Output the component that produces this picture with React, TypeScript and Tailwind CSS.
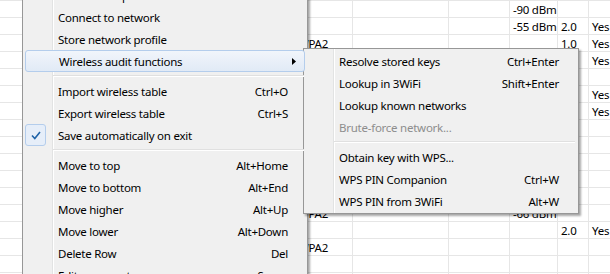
import React from 'react'

// ── Background table ──────────────────────────────────────────────────────────
const colW = [294, 58, 96, 61, 48, 31, 40]

const rows: string[][] = [
  ['', '', '', '', '-90 dBm', '', ''],
  ['', '', '', '', '-55 dBm', '2.0', 'Yes'],
  ['', 'WPA2', '', '', '', '1.0', 'Yes'],
  ['', 'WPA2', '', '', '-71 dBm', '2.0', 'Yes'],
  ['', '', '', '', '', '', ''],
  ['', 'WPA2', '', '', '-80 dBm', '2.0', 'Yes'],
  ['', 'WPA2', '', '', '-84 dBm', '2.0', 'Yes'],
  ['', '', '', '', '', '', ''],
  ['', '', '', '', '', '', ''],
  ['', '', '', '', '', '', ''],
  ['', '', '', '', '', '', ''],
  ['', '', '', '', '', '', ''],
  ['', 'WPA2', '', '', '-66 dBm', '', ''],
  ['', '', '', '', '', '2.0', 'Yes'],
  ['', 'WPA2', '', '', '', '', ''],
  ['', '', '', '', '', '', ''],
  ['', '', '', '', '', '', ''],
]

function Table() {
  return (
    <div className="flex flex-col">
      {rows.map((r, i) => (
        <div key={i} className="flex h-[17px] border-t border-[#e6e6e6]">
          {r.map((c, j) => (
            <div key={j}
              className={`shrink-0 px-[3px] pt-[1px] leading-[16px] whitespace-nowrap overflow-hidden ${j > 0 ? 'border-l border-[#e6e6e6]' : ''}`}
              style={{ width: colW[j] }}>
              {c}
            </div>
          ))}
        </div>
      ))}
    </div>
  )
}

// ── Menu pieces ───────────────────────────────────────────────────────────────
interface ItemProps {
  label: string
  shortcut?: string
  arrow?: boolean
  checked?: boolean
  disabled?: boolean
  active?: boolean
}

function Item({ label, shortcut, arrow, checked, disabled, active }: ItemProps) {
  return (
    <div className={`relative z-10 flex h-[22px] items-center pt-[1px] pl-[33px] pr-[17px] whitespace-nowrap
      ${active ? 'rounded-[3px] border border-[#b4cdec] bg-gradient-to-b from-[#f1f5fb] to-[#e1eaf6] pl-[32px] pr-[16px]' : ''}
      ${disabled ? 'text-[#8d8d8d]' : 'text-black'}`}>
      {checked && (
        <div className="absolute left-0 top-0 flex h-[22px] w-[21px] items-center justify-center rounded-[3px] border border-[#b4cdec] bg-[#e6eef9]">
          <svg width="10" height="9" viewBox="0 0 10 9">
            <path d="M1 4.5 L3.8 7.5 L9 1" fill="none" stroke="#1f63a8" strokeWidth="1.6" />
          </svg>
        </div>
      )}
      <span className="flex-1">{label}</span>
      {shortcut && <span>{shortcut}</span>}
      {arrow && (
        <svg className="absolute right-[8px] top-[7px]" width="4" height="7" viewBox="0 0 4 7">
          <path d="M0 0 L4 3.5 L0 7 Z" fill="#000" />
        </svg>
      )}
    </div>
  )
}

function Sep() {
  return (
    <div className="relative z-10 ml-[28px] mr-[1px] flex h-[8px] flex-col justify-center">
      <div className="h-px bg-[#e0e0e0]" />
      <div className="h-px bg-white" />
    </div>
  )
}

function Gutter() {
  return (
    <div className="absolute top-0 bottom-0 left-[29px] flex">
      <div className="w-px bg-[#e2e3e3]" />
      <div className="w-px bg-white" />
    </div>
  )
}

export default function App() {
  return (
    <div className="relative h-[274px] w-[610px] overflow-hidden bg-white text-[11.5px] tracking-[-0.25px] text-black"
      style={{ fontFamily: '"Noto Sans", "Open Sans", sans-serif' }}>
      <Table />

      {/* main context menu */}
      <div className="absolute left-[22px] top-[-41px] w-[286px] border border-[#979797] bg-[#f0f0f0] px-[2px] py-[2px] shadow-[2px_2px_2px_rgba(0,0,0,0.35)]">
        <Gutter />
        <Item label="Copy row" />
        <Item label="Show on map" />
        <Item label="Connect to network" />
        <Item label="Store network profile" />
        <Item label="Wireless audit functions" arrow active />
        <Sep />
        <Item label="Import wireless table" shortcut="Ctrl+O" />
        <Item label="Export wireless table" shortcut="Ctrl+S" />
        <Item label="Save automatically on exit" checked />
        <Sep />
        <Item label="Move to top" shortcut="Alt+Home" />
        <Item label="Move to bottom" shortcut="Alt+End" />
        <Item label="Move higher" shortcut="Alt+Up" />
        <Item label="Move lower" shortcut="Alt+Down" />
        <Item label="Delete Row" shortcut="Del" />
        <Item label="Edit comments" shortcut="Space" />
      </div>

      {/* submenu */}
      <div className="absolute left-[303px] top-[48px] w-[276px] border border-[#979797] bg-[#f0f0f0] px-[2px] py-px shadow-[2px_2px_2px_rgba(0,0,0,0.35)]">
        <Gutter />
        <Item label="Resolve stored keys" shortcut="Ctrl+Enter" />
        <Item label="Lookup in 3WiFi" shortcut="Shift+Enter" />
        <Item label="Lookup known networks" />
        <Item label="Brute-force network..." disabled />
        <Sep />
        <Item label="Obtain key with WPS..." />
        <Item label="WPS PIN Companion" shortcut="Ctrl+W" />
        <Item label="WPS PIN from 3WiFi" shortcut="Alt+W" />
      </div>
    </div>
  )
}
